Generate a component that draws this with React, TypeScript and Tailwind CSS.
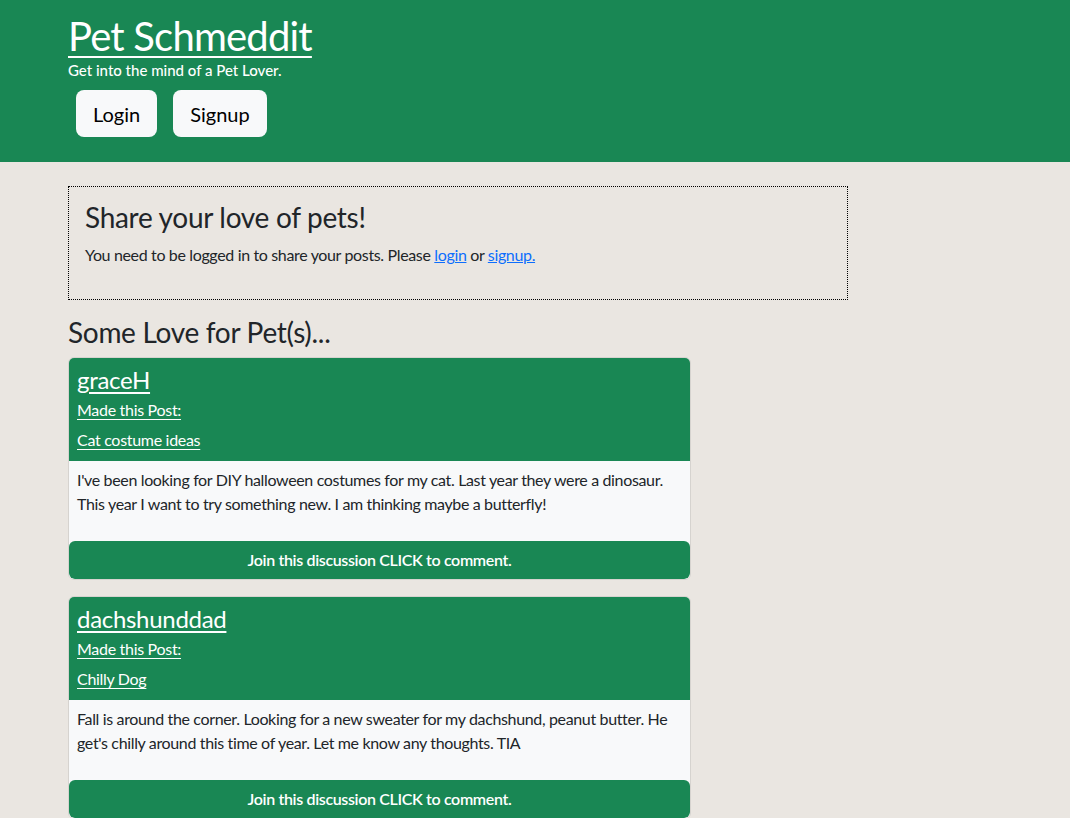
import React from "react";

type Post = {
  _id: string;
  username: string;
  title: string;
  text: string;
};

const posts: Post[] = [
  {
    _id: "1",
    username: "graceH",
    title: "Cat costume ideas",
    text: "I've been looking for DIY halloween costumes for my cat. Last year they were a dinosaur. This year I want to try something new. I am thinking maybe a butterfly!",
  },
  {
    _id: "2",
    username: "dachshunddad",
    title: "Chilly Dog",
    text: "Fall is around the corner. Looking for a new sweater for my dachshund, peanut butter. He get's chilly around this time of year. Let me know any thoughts. TIA",
  },
];

const PostCard = ({ post }: { post: Post }) => (
  <div className="w-[623px] rounded-[6px] border border-[#d6d3cf] bg-[#f8f9fa] overflow-hidden">
    {/* Card header */}
    <div className="bg-[#198754] px-2 pt-[6px] pb-[9px] text-white">
      <a href="#" className="block w-fit text-[24px] leading-[32px] tracking-[-0.3px] underline underline-offset-[3px]">
        {post.username}
      </a>
      <a href="#" className="mt-[2px] block w-fit text-[16px] leading-[24px] tracking-[-0.3px] underline underline-offset-[3px]">
        Made this Post:
      </a>
      <a href="#" className="mt-[6px] block w-fit text-[16px] leading-[24px] tracking-[-0.3px] underline underline-offset-[3px]">
        {post.title}
      </a>
    </div>

    {/* Body */}
    <div className="px-2 pt-[7px] pb-[25px] text-[16px] leading-[24px] tracking-[-0.35px] text-[#212529]">
      {post.text}
    </div>

    {/* Footer */}
    <button className="block h-[38px] w-full rounded-[6px] bg-[#198754] text-[16px] font-semibold tracking-[-0.35px] text-white">
      Join this discussion CLICK to comment.
    </button>
  </div>
);

export default function App() {
  return (
    <div className="min-h-[818px] bg-[#eae6e1] font-['Lato',sans-serif] text-[#212529]">
      <header className="bg-[#198754] pt-[12px] pb-[25px] text-white">
        <div className="mx-auto w-[960px] pl-[13px] pr-[11px]">
          <a href="#" className="block w-fit text-[40px] leading-[48px] tracking-[-0.8px] underline underline-offset-[5px] decoration-2">
            Pet Schmeddit
          </a>
          <p className="text-[15px] leading-[20px] font-medium">Get into the mind of a Pet Lover.</p>
          <div className="mt-[10px] flex gap-4 px-2">
            <button className="h-[47px] rounded-[8px] bg-[#f8f9fa] px-[17px] text-[20px] text-black">Login</button>
            <button className="h-[47px] rounded-[8px] bg-[#f8f9fa] px-[17px] text-[20px] text-black">Signup</button>
          </div>
        </div>
      </header>

      <main className="mx-auto w-[960px] pl-[13px] pr-[11px] pt-[24px]">
        <div className="w-[780px] border border-dotted border-black px-4 pt-[13px] pb-[32px]">
          <h2 className="text-[28px] leading-[34px] tracking-[-0.3px]">Share your love of pets!</h2>
          <p className="mt-[9px] text-[16px] leading-[24px] tracking-[-0.35px]">
            You need to be logged in to share your posts. Please{" "}
            <a href="#" className="text-[#0d6efd] underline">login</a> or{" "}
            <a href="#" className="text-[#0d6efd] underline">signup.</a>
          </p>
        </div>

        <h3 className="mt-[15px] mb-[8px] text-[28px] leading-[34px] tracking-[-0.3px]">Some Love for Pet(s)...</h3>

        <div className="flex flex-col gap-[16px]">
          {posts.map((post) => (
            <PostCard key={post._id} post={post} />
          ))}
        </div>
      </main>
    </div>
  );
}
